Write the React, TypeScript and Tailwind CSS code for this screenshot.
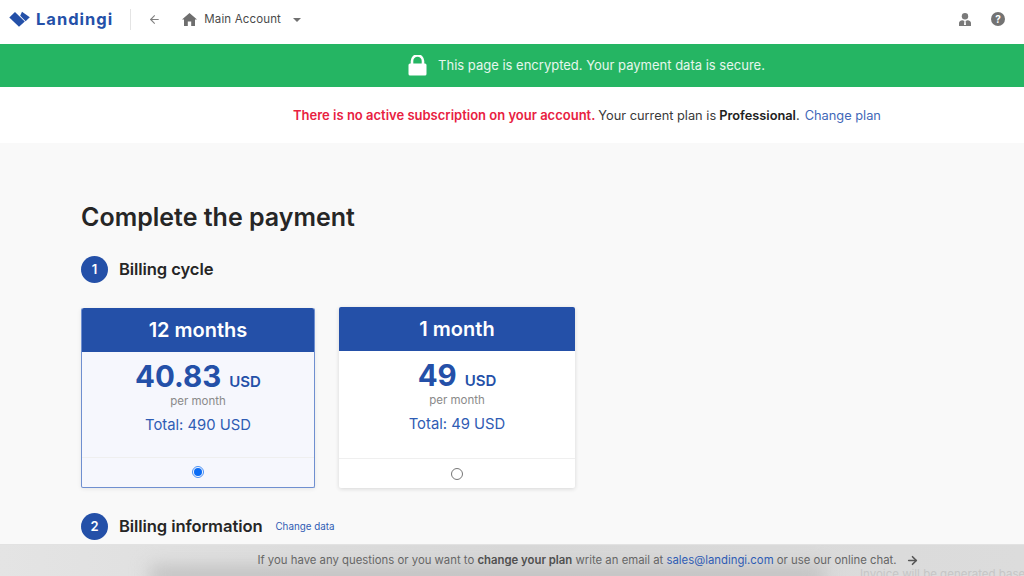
import React from "react";
import { ArrowLeft, ArrowRight } from "lucide-react";

function Step({ n, title, link }: { n: number; title: string; link?: string }) {
  return (
    <div className="flex items-center h-[27px]">
      <div className="w-[27px] h-[27px] rounded-full bg-[#2450a8] text-white flex items-center justify-center text-[13px] font-semibold">{n}</div>
      <div className="ml-[11px] text-[16.6px] font-semibold text-[#262626] tracking-[-0.1px]">{title}</div>
      {link && <div className="ml-[13px] text-[9.8px] text-[#2f5cb4] mt-[2px]">{link}</div>}
    </div>
  );
}

function Card({ head, price, total, selected }: { head: string; price: string; total: string; selected?: boolean }) {
  return (
    <div className={selected
      ? "w-[234px] h-[180px] flex flex-col rounded-[2px] border border-t-0 border-[#6f8fd0] bg-[#f6f7fd] shadow-[0_1px_4px_rgba(0,0,0,0.08)]"
      : "w-[236px] h-[181px] -mt-[1px] flex flex-col rounded-[2px] bg-white shadow-[0_1px_4px_rgba(0,0,0,0.14)]"}>
      <div className="h-[44px] shrink-0 bg-[#2450a8] text-white flex items-center justify-center text-[20px] font-semibold rounded-t-[2px] pb-[1px]">{head}</div>
      <div className="flex-1 flex flex-col items-center">
        <div className="flex items-baseline h-[36px] mt-[6px] leading-[36px]">
          <span className="text-[29.5px] font-bold text-[#2450a8]">{price}</span>
          <span className="text-[15px] font-semibold text-[#2450a8] ml-[8px]">USD</span>
        </div>
        <div className="text-[11.5px] leading-[14px] text-[#8a8a8a]">per month</div>
        <div className="text-[14.8px] leading-[20px] text-[#2f5cb4] mt-[7px]">{total}</div>
      </div>
      <div className={selected
        ? "h-[30px] shrink-0 border-t border-[#efefef] flex items-center justify-center pb-[1px]"
        : "h-[30px] shrink-0 border-t border-[#efefef] flex items-center justify-center"}>
        {selected ? (
          <div className="w-[12px] h-[12px] rounded-full border border-[#4a90f5] flex items-center justify-center">
            <div className="w-[8px] h-[8px] rounded-full bg-[#0a6cf5]" />
          </div>
        ) : (
          <div className="w-[12px] h-[12px] rounded-full border border-[#767676] bg-white" />
        )}
      </div>
    </div>
  );
}

export default function App() {
  return (
    <div className="relative w-[1024px] h-[576px] overflow-hidden bg-[#f9f9f9] font-['Inter',sans-serif]">
      <header className="h-[44px] bg-white flex items-center pb-[6px]">
        <svg width="21" height="16" viewBox="0 0 21 16" className="ml-[9px] shrink-0">
          <path d="M0.3 6.5 L6 1 L15.8 10.5 L10 15.8 Z" fill="#2450a8" />
          <path d="M13 0.8 L20.8 6.2 L16.6 10.2 L11.2 4.8 Z" fill="#2450a8" />
        </svg>
        <span className="ml-[6px] text-[16.5px] font-bold text-[#2450a8] tracking-[1px]">Landingi</span>
        <div className="ml-[17px] w-px h-[21px] bg-[#e4e4e4]" />
        <ArrowLeft className="ml-[17px] text-[#808080]" size={13} strokeWidth={2} />
        <svg width="15" height="13" viewBox="0 0 15 13" className="ml-[21px]">
          <path d="M7.5 0 L15 6.6 H13 V13 H9.2 V8.6 H5.8 V13 H2 V6.6 H0 Z" fill="#6e6e6e" />
        </svg>
        <span className="ml-[7px] mt-[1px] text-[11.5px] text-[#4a4a4a] tracking-[0.15px]">Main Account</span>
        <div className="ml-[12px] mt-[1px] w-0 h-0 border-l-[4px] border-r-[4px] border-t-[4px] border-l-transparent border-r-transparent border-t-[#707070]" />
        <div className="ml-auto flex items-center">
          <svg width="12" height="13" viewBox="0 0 12 13">
            <circle cx="6" cy="3.3" r="3.2" fill="#7a7a7a" />
            <path d="M0 13 V10 Q0 7.6 3.6 7.2 L5.4 8 L5 12 H7 L6.6 8 L8.4 7.2 Q12 7.6 12 10 V13 Z" fill="#7a7a7a" />
          </svg>
          <div className="ml-[20px] mr-[19px] w-[14px] h-[14px] rounded-full bg-[#737373] text-white flex items-center justify-center text-[10px] font-bold">?</div>
        </div>
      </header>

      <div className="h-[43px] bg-[#25b563] flex items-center justify-center text-white text-[13px] pl-[150px]">
        <svg width="19" height="21" viewBox="0 0 19 21" className="mr-[11px] -ml-[1px]">
          <path d="M4 9 V6 a5.5 5.5 0 0 1 11 0 V9" fill="none" stroke="#fff" strokeWidth="2.6" />
          <rect x="0.5" y="8.5" width="18" height="12" rx="1.5" fill="#fff" />
        </svg>
        <span className="text-[#e6f7ed]">This page is encrypted. Your payment data is secure.</span>
      </div>

      <div className="h-[56px] bg-white flex items-center pl-[293px] pt-[1px] text-[12.8px] text-[#3a3a3a]">
        <span className="text-[13px] font-semibold text-[#e8213f]">There is no active subscription on your account.</span>
        <span className="ml-[3px]">Your current plan is</span>
        <span className="ml-[3px] font-semibold text-[#222]">Professional</span>
        <span>.</span>
        <span className="ml-[5px] text-[#3f68b8]">Change plan</span>
      </div>

      <main className="pl-[81px] pt-[58px]">
        <h1 className="text-[25px] leading-[32px] font-semibold text-[#262626]">Complete the payment</h1>
        <div className="mt-[23px]"><Step n={1} title="Billing cycle" /></div>
        <div className="mt-[25px] flex gap-[24px]">
          <Card head="12 months" price="40.83" total="Total: 490 USD" selected />
          <Card head="1 month" price="49" total="Total: 49 USD" />
        </div>
        <div className="mt-[25px]"><Step n={2} title="Billing information" link="Change data" /></div>
      </main>

      <div className="absolute left-0 right-0 bottom-0 h-[32px] overflow-hidden bg-gradient-to-r from-[#e4e4e4] via-[#d8d8d8] to-[#dcdcdc] border-t border-[#e2e2e2] flex items-center justify-center text-[11.35px] text-[#666] pl-[152px]">
        <div className="absolute left-[150px] right-[200px] -bottom-[10px] h-[20px] bg-[#c0c0c0] blur-[9px]" />
        <div className="absolute left-[860px] top-[21px] whitespace-nowrap text-[11.5px] text-[#c6c6c6]">Invoice will be generated base</div>
        <span className="relative">If you have any questions or you want to <b className="font-semibold text-[#4f4f4f]">change your plan</b> write an email at <span className="text-[#2f5cb4]">sales@landingi.com</span> or use our online chat.</span>
        <ArrowRight className="relative ml-[9px] text-[#555]" size={13} strokeWidth={3} />
      </div>
    </div>
  );
}
